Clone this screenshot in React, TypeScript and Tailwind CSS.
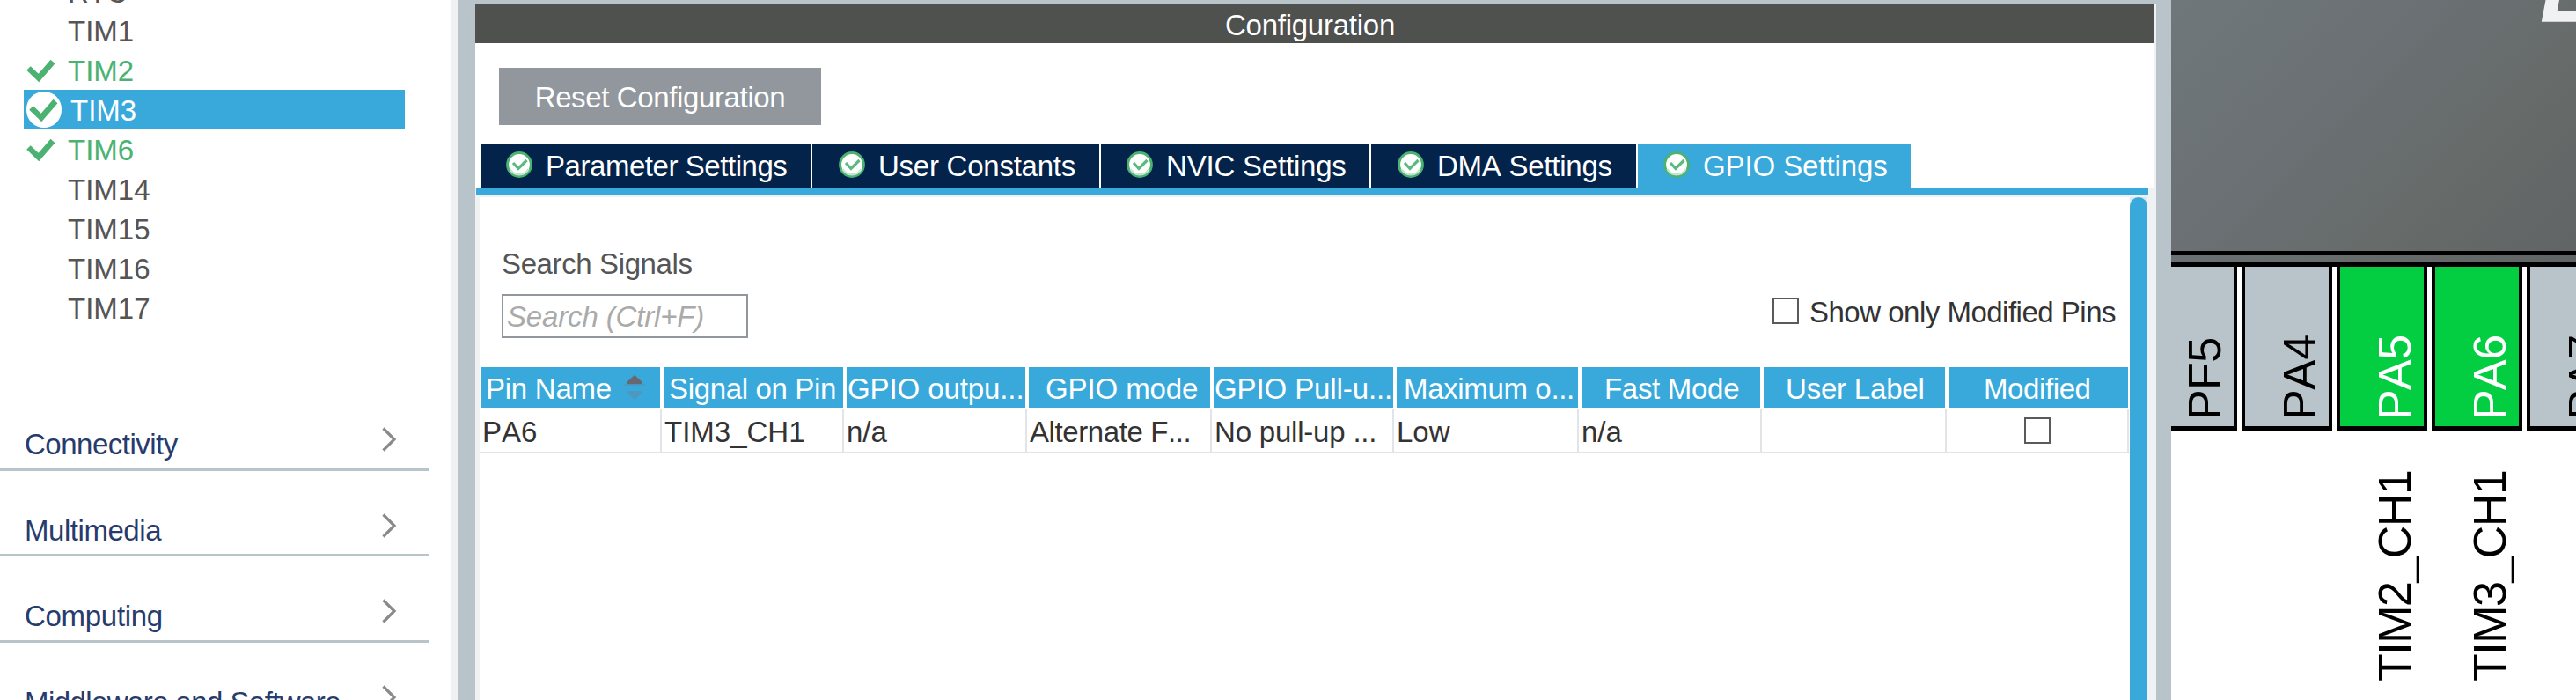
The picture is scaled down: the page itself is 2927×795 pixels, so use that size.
import React from "react";

const TREE = [
  { name: "TIM1", state: "off" },
  { name: "TIM2", state: "on" },
  { name: "TIM3", state: "selected" },
  { name: "TIM6", state: "on" },
  { name: "TIM14", state: "off" },
  { name: "TIM15", state: "off" },
  { name: "TIM16", state: "off" },
  { name: "TIM17", state: "off" },
];

const CATEGORIES = [
  { name: "Connectivity", box: "h-[98px]", track: "tracking-[-0.5px]" },
  { name: "Multimedia", box: "h-[97px]", track: "tracking-[-0.45px]" },
  { name: "Computing", box: "h-[98px]", track: "tracking-[-0.3px]" },
  { name: "Middleware and Software", box: "h-[98px]", track: "tracking-[-0.58px]" },
];

const TABS = [
  { name: "Parameter Settings", box: "w-[375px] bg-[#03234b]", pad: "pl-[29px]", gap: "ml-[15px]", track: "tracking-[-0.45px]" },
  { name: "User Constants", box: "w-[326px] bg-[#03234b]", pad: "pl-[30px]", gap: "ml-[15px]", track: "tracking-[-0.25px]" },
  { name: "NVIC Settings", box: "w-[305px] bg-[#03234b]", pad: "pl-[29px]", gap: "ml-[15px]", track: "tracking-[-0.2px]" },
  { name: "DMA Settings", box: "w-[301px] bg-[#03234b]", pad: "pl-[30px]", gap: "ml-[15px]", track: "tracking-[-0.25px]" },
  { name: "GPIO Settings", box: "w-[310px] bg-[#39a9dc]", pad: "pl-[29px]", gap: "ml-[15px]", track: "tracking-[-0.1px]" },
];

const COLUMNS = [
  { name: "Pin Name", head: "w-[203px] pl-[5px]", cell: "w-[207px]", value: "PA6", ht: "tracking-[-0.25px]", vt: "", sorted: true },
  { name: "Signal on Pin", head: "w-[204px] pl-[6px]", cell: "w-[207px]", value: "TIM3_CH1", ht: "tracking-[-0.35px]", vt: "" },
  { name: "GPIO outpu...", head: "w-[203px] pl-px", cell: "w-[208px]", value: "n/a", ht: "tracking-[-0.1px]", vt: "" },
  { name: "GPIO mode", head: "w-[206px] pl-[19px]", cell: "w-[210px]", value: "Alternate F...", ht: "tracking-[-0.1px]", vt: "tracking-[-0.4px]" },
  { name: "GPIO Pull-u...", head: "w-[204px] pl-px", cell: "w-[207px]", value: "No pull-up ...", ht: "tracking-[-0.1px]", vt: "tracking-[-0.2px]" },
  { name: "Maximum o...", head: "w-[206px] pl-[8px]", cell: "w-[210px]", value: "Low", ht: "tracking-[-0.35px]", vt: "" },
  { name: "Fast Mode", head: "w-[203px] pl-[26px]", cell: "w-[208px]", value: "n/a", ht: "tracking-[-0.3px]", vt: "" },
  { name: "User Label", head: "w-[206px] pl-[25px]", cell: "w-[210px]", value: "", ht: "tracking-[-0.2px]", vt: "" },
  { name: "Modified", head: "w-[204px] pl-[40px]", cell: "w-[207px]", value: "check", ht: "tracking-[-0.4px]", vt: "" },
];

const PINS = [
  { name: "PF5", box: "-ml-[28px] bg-[#b8c4ca] text-black", label: "" },
  { name: "PA4", box: "bg-[#b8c4ca] text-black", label: "" },
  { name: "PA5", box: "bg-[#03ce42] text-white", label: "TIM2_CH1" },
  { name: "PA6", box: "bg-[#03ce42] text-white", label: "TIM3_CH1" },
  { name: "PA7", box: "bg-[#b8c4ca] text-black", label: "" },
];

function Tick({ className }: { className: string }) {
  return (
    <svg className={className} viewBox="0 0 34 30" fill="none">
      <path d="M3.500 12.500 L15 23.500 L31 5" stroke="#4bb272" strokeWidth="6.500" />
    </svg>
  );
}

function TabIcon() {
  return (
    <svg className="h-[30px] w-[30px] shrink-0" viewBox="0 0 30 30" fill="none">
      <circle cx="15" cy="15" r="13.4" fill="#fff" stroke="#4bb272" strokeWidth="3" />
      <path d="M4.500 20 A12 12 0 0 0 25.500 20" stroke="#c4e6d0" strokeWidth="2.500" />
      <path d="M8 13 L14 19.500 L23.500 10" stroke="#5cba80" strokeWidth="3.200" />
    </svg>
  );
}

function Checkbox() {
  return <span className="block h-[30px] w-[30px] shrink-0 border-2 border-[#5a5a5a] bg-white" />;
}

function Sidebar() {
  return (
    <aside className="flex h-full w-[512px] shrink-0 flex-col overflow-hidden bg-white">
      <div className="-mt-[33px] flex h-[45px] shrink-0 items-center pl-[77px] pt-[3px] text-[#555]">RTC</div>
      <ul className="shrink-0">
        {TREE.map((item) => (
          <li
            key={item.name}
            className={
              item.state === "selected"
                ? "ml-[27px] flex h-[45px] w-[433px] items-center bg-[#39a9dc] text-white"
                : item.state === "on"
                  ? "ml-[27px] flex h-[45px] w-[433px] items-center text-[#4bb272]"
                  : "ml-[27px] flex h-[45px] w-[433px] items-center text-[#555]"
            }
          >
            {item.state === "selected" ? (
              <span className="ml-[3px] mr-[10px] flex h-[41px] w-[40px] items-center justify-center rounded-full bg-white">
                <Tick className="-ml-[3px] mt-px h-[30px] w-[34px]" />
              </span>
            ) : (
              <span className="ml-[2px] mr-[12px] flex w-[36px]">
                {item.state === "on" && <Tick className="h-[30px] w-[34px]" />}
              </span>
            )}
            <span className="pt-[2px]">{item.name}</span>
          </li>
        ))}
      </ul>
      <div className="mt-[65px] shrink-0">
        {CATEGORIES.map((c) => (
          <div key={c.name} className={`w-[487px] border-b-[3px] border-[#b8c4ca] ${c.box}`}>
            <div className="flex items-start justify-between pl-[28px] pr-[36px] pt-[45px] text-[#273b6d]">
              <span className={`leading-[45px] ${c.track}`}>{c.name}</span>
              <svg className="mt-[3px] h-[28px] w-[17px]" viewBox="0 0 17 28" fill="none">
                <path d="M1.500 1.500 L14 14 L1.500 26.500" stroke="#8a8a8a" strokeWidth="3.200" />
              </svg>
            </div>
          </div>
        ))}
      </div>
    </aside>
  );
}

function SignalTable() {
  return (
    <div className="mt-[33px] w-[1875px]">
      <div className="flex h-[46px] gap-[4px] pl-[2px] text-white">
        {COLUMNS.map((c) => (
          <div key={c.name} className={`flex shrink-0 items-center whitespace-nowrap bg-[#39a9dc] ${c.head}`}>
            <span className={`pt-[3px] ${c.ht}`}>{c.name}</span>
            {c.sorted && (
              <svg className="-mt-px ml-[14px] h-[28px] w-[24px]" viewBox="0 0 24 28">
                <path d="M12 0 L21 8 V10.500 H3 V8 Z" fill="#666a70" />
                <path d="M0 11 H24" stroke="#4c98c0" strokeWidth="1.500" />
                <path d="M3 18 H21 V20 L12 28 L3 20 Z" fill="#4c98c0" />
              </svg>
            )}
          </div>
        ))}
      </div>
      <div className="mt-[2px] flex h-[50px] border-b-2 border-[#e1e5e8] text-[#333]">
        {COLUMNS.map((c) => (
          <div key={c.name} className={`flex shrink-0 items-center whitespace-nowrap border-r-2 border-[#e1e5e8] pl-[3px] ${c.cell}`}>
            {c.value === "check" ? (
              <span className="ml-[85px] -mt-[1px]">
                <Checkbox />
              </span>
            ) : (
              <span className={`pt-[2px] ${c.vt}`}>{c.value}</span>
            )}
          </div>
        ))}
      </div>
    </div>
  );
}

function Configuration() {
  return (
    <main className="flex h-full w-[1910px] shrink-0 flex-col border-t-4 border-[#b8c4ca] bg-white">
      <div className="flex h-[45px] shrink-0">
        <div className="flex w-[1907px] items-center justify-center bg-[#4f514f] pt-[4px] pr-[10px] tracking-[-0.25px] text-white">
          Configuration
        </div>
        <div className="w-[3px] bg-[#f0f1f3]" />
      </div>
      <div className="flex h-[164px] shrink-0">
        <div className="flex w-[1907px] flex-col justify-between pt-[28px]">
          <button className="ml-[27px] flex h-[65px] w-[366px] items-center justify-center bg-[#91979d] pt-[2px] tracking-[-0.37px] text-white">
            Reset Configuration
          </button>
          <div className="flex h-[49px] gap-[2px] pl-[6px] text-white">
            {TABS.map((t) => (
              <div key={t.name} className={`flex shrink-0 items-center whitespace-nowrap ${t.box} ${t.pad}`}>
                <span className="-mt-[3px]">
                  <TabIcon />
                </span>
                <span className={`${t.gap} ${t.track}`}>{t.name}</span>
              </div>
            ))}
          </div>
        </div>
        <div className="w-[3px] bg-[#f0f1f3]" />
      </div>
      <div className="flex min-h-0 flex-1 bg-[#f0f1f3]">
        <div className="flex w-[1901px] shrink-0 flex-col">
          <div className="ml-px h-[8px] shrink-0 bg-[#39a9dc]" />
          <div className="mt-[3px] flex min-h-0 flex-1">
            <div className="ml-[5px] w-[1875px] shrink-0 bg-white">
              <div className="flex h-[160px] justify-between pl-[25px]">
                <div className="pt-[53px]">
                  <div className="leading-[45px] tracking-[-0.38px] text-[#555]">Search Signals</div>
                  <div className="mt-[12px] flex h-[50px] w-[280px] items-center border-2 border-[#91979d] bg-white pl-[4px] pt-px italic tracking-[-0.15px] text-[#aaa]">
                    Search (Ctrl+F)
                  </div>
                </div>
                <div className="flex h-[37px] -translate-y-[13px] items-center self-end pr-[16px] text-[#333]">
                  <Checkbox />
                  <span className="ml-[12px] whitespace-nowrap pt-[3px] tracking-[-0.5px]">Show only Modified Pins</span>
                </div>
              </div>
              <SignalTable />
            </div>
            <div className="w-[20px] shrink-0 bg-[#dbe8f3]">
              <div className="h-full rounded-t-[10px] bg-[#39a9dc]" />
            </div>
          </div>
        </div>
      </div>
    </main>
  );
}

function ChipView() {
  return (
    <section className="h-full w-[460px] shrink-0 overflow-hidden bg-white">
      <div className="flex h-[303px] flex-col bg-[linear-gradient(135deg,#70777a_0%,#6a7073_40%,#676c6b_65%,#606464_100%)]">
        <div className="flex h-[285px] justify-end">
          <svg className="h-[25px] w-[40px]" viewBox="0 0 40 25">
            <path d="M5.500 0 L0.800 24.700 H40 V12.300 H18.700 L21 0 Z" fill="#f0f1f3" />
          </svg>
        </div>
        <div className="h-[13px] border-t-[5px] border-black" />
        <div className="h-[5px] bg-black" />
      </div>
      <div className="flex gap-[5px]">
        {PINS.map((p) => (
          <div
            key={p.name}
            className={`relative h-[186px] w-[103px] shrink-0 border-x-4 border-b-[5px] border-black text-[52px] leading-[52px] ${p.box}`}
          >
            <span className="absolute left-[88px] top-[122px] h-[52px] origin-bottom-left -rotate-90 whitespace-nowrap tracking-[-0.6px]">
              {p.name}
            </span>
            {p.label && (
              <span className="absolute left-[88px] top-[419px] h-[52px] origin-bottom-left -rotate-90 whitespace-nowrap tracking-[-1.5px] text-black">
                {p.label}
              </span>
            )}
          </div>
        ))}
      </div>
    </section>
  );
}

export default function App() {
  return (
    <div className="flex h-[795px] w-[2927px] overflow-hidden bg-white font-['Liberation_Sans',Arial,sans-serif] text-[33px] leading-[33px] [font-kerning:none]">
      <Sidebar />
      <div className="w-[8px] shrink-0 bg-[#f0f1f3]" />
      <div className="w-[20px] shrink-0 bg-[#b8c4ca]" />
      <Configuration />
      <div className="w-[17px] shrink-0 bg-[#b8c4ca]" />
      <ChipView />
    </div>
  );
}
